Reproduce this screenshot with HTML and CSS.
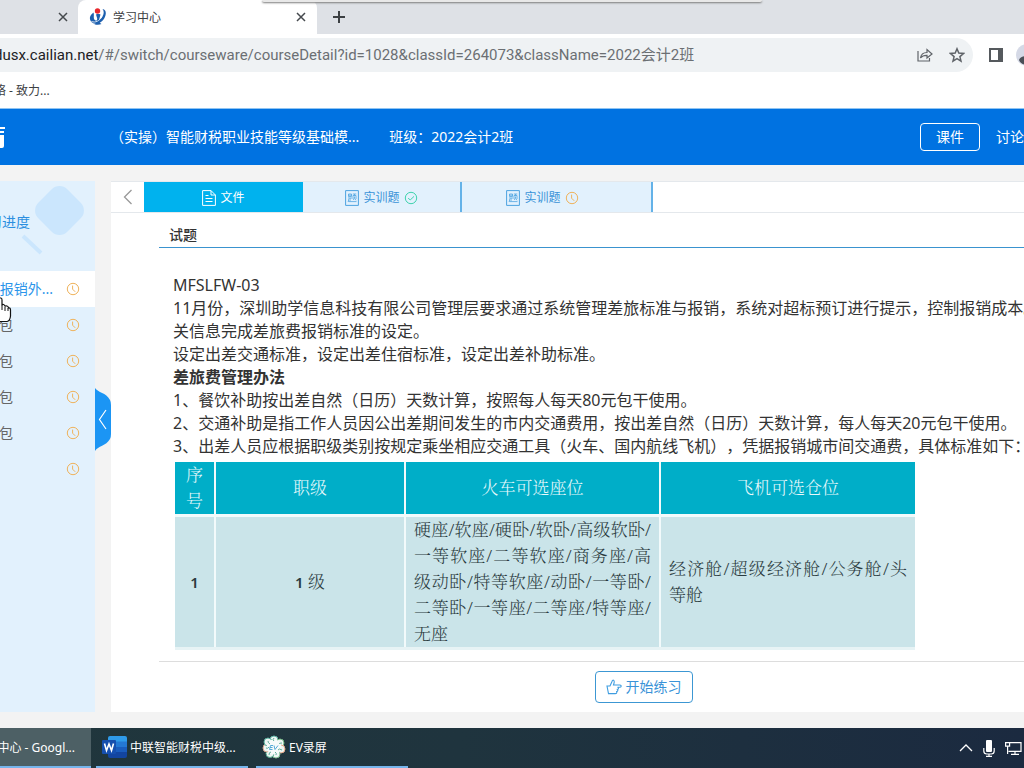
FILE: index.html
```html
<!DOCTYPE html>
<html lang="zh-CN">
<head>
<meta charset="utf-8">
<title>学习中心</title>
<link rel="stylesheet" href="styles.css">
</head>
<body>
<svg class="defs" width="0" height="0" aria-hidden="true">
  <symbol id="clock" viewBox="0 0 14 14"><circle cx="7" cy="7" r="5.7"/><path d="M6.6 3.6v3.6l2.6 2.6"/></symbol>
  <symbol id="close" viewBox="0 0 10 10"><path d="M1 1l8 8M9 1l-8 8"/></symbol>
  <symbol id="quiz" viewBox="0 0 14 16"><path d="M.6.6h12.8v14.8H.6z"/><path stroke-width=".8" d="M3.5 4h3v2.500h-3zM3.5 5.200h3M3 8h4M5 8v3.200M3.500 9.200v2l-.7.8M3.500 11.600h8M7.800 4h3.500M9.500 4v1.500M8 5.500h3v3.500M8 5.500v3.500M9.500 6.500v1.700L8.300 10M9.800 9l1.400 1.200"/></symbol>
</svg>

<div class="tabstrip">
  <div class="tab tab-back"><button class="plain" aria-label="关闭标签页"><svg class="x" width="10" height="10"><use href="#close"/></svg></button></div>
  <div class="tab tab-front">
    <svg width="18" height="18" viewBox="0 0 18 18"><path fill="#1d5fae" d="M4.500 4.500C1.500 6.500.2 9.500 1.200 12c.8 2.600 3.600 4 6.600 3.600C12.500 15 16.500 10.500 16.800 5.500 17 3 15.800 1.600 13.500 1c1.600 2 1.600 4.500.2 7-1.500 2.800-4 4.600-6 4.600-1.900 0-2.900-1.300-2.900-3.200 0-1.600.3-3-.3-4.900z"/><path fill="#1d5fae" d="M7 6.500c1.600-.6 3-.5 4.500 0L10 12c0 2 .8 3 2.500 4-2 1-5 1-7 .2C8 14.500 8 13 8.200 10.500z"/><path stroke="#fff" stroke-width=".8" fill="none" d="M2.500 13.500c4 1.500 8-.5 10.500-5"/><circle cx="8.500" cy="3" r="2.700" fill="#e8262c"/></svg>
    <span class="tab-name">学习中心</span>
    <button class="plain" aria-label="关闭标签页"><svg class="x" width="10" height="10"><use href="#close"/></svg></button>
  </div>
  <button class="plain new-tab" aria-label="新标签页"><svg width="14" height="14" viewBox="0 0 14 14"><path d="M7 1v12M1 7h12" stroke="#3c4043" stroke-width="2"/></svg></button>
  <div class="floating-edge"></div>
</div>

<div class="toolbar">
  <div class="omnibox">
    <div class="url"><span><b>edusx.cailian.net</b>/#/switch/courseware/courseDetail?id=1028&amp;classId=264073&amp;className=2022会计2班</span></div>
    <button class="plain" aria-label="分享"><svg width="16" height="16" viewBox="0 0 16 16" fill="none" stroke="#5f6368" stroke-width="1.200"><path d="M1 4v10h11.500v-3M3.500 11c.5-3.500 3-5.500 6.500-5.500V2.500L15 7l-5 4V8.300C7 8.200 5 9 3.500 11z"/></svg></button>
    <button class="plain" aria-label="收藏"><svg width="16" height="16" viewBox="0 0 16 16" fill="none" stroke="#5f6368" stroke-width="1.500"><path d="M8 1.800l1.800 4.300 4.700.4-3.600 3.100 1.100 4.600L8 11.700l-4 2.500 1.100-4.600-3.600-3.100 4.700-.4z"/></svg></button>
  </div>
  <button class="plain" aria-label="侧边栏"><svg width="14" height="14" viewBox="0 0 14 14"><path fill="#55595d" d="M0 0h14v14H0z"/><path fill="#fff" d="M2 2h7v10H2z"/></svg></button>
  <svg class="avatar" width="24" height="24" viewBox="0 0 24 24"><circle cx="12" cy="12" r="11" fill="#d5d9e6"/><path fill="#4a4f57" d="M4 17c1-3 4-4 8-4v9c-4 0-7-2-8-5z"/></svg>
</div>

<div class="bookmarks"><a class="bookmark" href="#">网络 - 致力...</a></div>

<header class="site-header">
  <div class="logo"><svg width="6" height="24" viewBox="0 0 6 24"><path fill="#fff" d="M0 2h5v2H0zM0 6h4v2H0zM0 10h4v11q0 2-2 2H0z"/></svg></div>
  <h1 class="course">（实操）智能财税职业技能等级基础模...</h1>
  <span class="class-name">班级：2022会计2班</span>
  <nav class="site-nav">
    <button class="nav-button">课件</button>
    <a href="#">讨论</a>
  </nav>
</header>

<main class="workspace">
  <aside class="sidebar">
    <div class="progress">
      <svg class="magnifier" width="72" height="76" viewBox="0 0 72 76"><rect x="19" y="8" width="41" height="41" rx="11" transform="rotate(45 39.500 28.500)" fill="#cbe6fd"/><path d="M3 54l18 17" stroke="#cbe6fd" stroke-width="4"/></svg>
      <span class="progress-name">学习进度</span>
    </div>
    <ul class="lessons">
      <li class="current"><span class="lesson"><a href="#">报销外...</a></span><svg class="clock" width="14" height="14"><use href="#clock"/></svg></li>
      <li><span class="lesson"><a href="#">外包</a></span><svg class="clock" width="14" height="14"><use href="#clock"/></svg></li>
      <li><span class="lesson"><a href="#">外包</a></span><svg class="clock" width="14" height="14"><use href="#clock"/></svg></li>
      <li><span class="lesson"><a href="#">外包</a></span><svg class="clock" width="14" height="14"><use href="#clock"/></svg></li>
      <li><span class="lesson"><a href="#">外包</a></span><svg class="clock" width="14" height="14"><use href="#clock"/></svg></li>
      <li><span class="lesson"></span><svg class="clock" width="14" height="14"><use href="#clock"/></svg></li>
    </ul>
    <svg class="pointer" width="12" height="26" viewBox="0 0 12 26"><path fill="#fff" stroke="#111" stroke-width="1.200" d="M-4 1h5q1 0 1 2v6q0-2 1.500-1.500T5 9.500q.5-1 2-.5t1.500 2q2-.5 2 2v6q-.5 5-3.500 5.500h-11"/><path stroke="#111" d="M2 9v4M5 10v4M8 11v3"/></svg>
  </aside>
  <div class="gutter"><button class="plain" aria-label="收起"><svg width="16" height="64" viewBox="0 0 16 64"><path fill="#1b95f4" d="M0 0C3 5 11 4 15 12q1 2 1 5v29q0 3-1 5C11 58 3 58 0 63z"/><path d="M11 22L4.500 31.500 11 41" fill="none" stroke="#fff" stroke-width="1.200"/></svg></button></div>

  <section class="panel">
    <div class="steps">
      <button class="step-prev" aria-label="上一个"><svg width="10" height="16" viewBox="0 0 10 16"><path d="M8.500 1L1.500 8l7 7" fill="none" stroke="#999" stroke-width="1.300"/></svg></button>
      <button class="step active"><svg width="14" height="16" viewBox="0 0 14 16" fill="none" stroke="#fff"><path d="M.6.6h8.400l4.400 4.400v10.400H.6zM9 .6V5h4.400M3.500 5.500h3M3.500 8.500h7M3.500 11.500h7"/></svg>文件</button>
      <button class="step"><svg class="quiz" width="14" height="16"><use href="#quiz"/></svg>实训题<svg class="done" width="14" height="14" viewBox="0 0 14 14"><circle cx="7" cy="7" r="5.700"/><path d="M4.200 7l2 2 3.800-3.600"/></svg></button>
      <button class="step step-wide"><svg class="quiz" width="14" height="16"><use href="#quiz"/></svg>实训题<svg class="clock" width="14" height="14"><use href="#clock"/></svg></button>
    </div>
    <div class="document">
      <h2 class="doc-title">试题</h2>
      <article class="doc-body">
        <p>MFSLFW-03</p>
        <p>11月份，深圳助学信息科技有限公司管理层要求通过系统管理差旅标准与报销，系统对超标预订进行提示，控制报销成本。<br>关信息完成差旅费报销标准的设定。</p>
        <p>设定出差交通标准，设定出差住宿标准，设定出差补助标准。</p>
        <p><strong>差旅费管理办法</strong></p>
        <p>1、餐饮补助按出差自然（日历）天数计算，按照每人每天80元包干使用。</p>
        <p>2、交通补助是指工作人员因公出差期间发生的市内交通费用，按出差自然（日历）天数计算，每人每天20元包干使用。</p>
        <p>3、出差人员应根据职级类别按规定乘坐相应交通工具（火车、国内航线飞机），凭据报销城市间交通费，具体标准如下：</p>
        <table class="grades">
          <colgroup><col class="c-no"><col class="c-grade"><col class="c-seat"><col class="c-seat"></colgroup>
          <thead><tr><th>序<br>号</th><th>职级</th><th>火车可选座位</th><th>飞机可选仓位</th></tr></thead>
          <tbody><tr><td class="mid"><b>1</b></td><td class="mid"><b>1</b> 级</td><td>硬座/软座/硬卧/软卧/高级软卧/一等软座/二等软座/商务座/高级动卧/特等软座/动卧/一等卧/二等卧/一等座/二等座/特等座/无座</td><td>经济舱/超级经济舱/公务舱/头等舱</td></tr></tbody>
        </table>
      </article>
      <footer class="doc-footer">
        <button class="start"><svg width="16" height="16" viewBox="0 0 16 16" fill="none" stroke="#3f9de0" stroke-width="1.100"><path d="M1 7h3l2-4.500Q6.500.8 7.500 1.200T8.200 3.500L7.500 6H14q1.200 0 1.200 1T14 8.200h-2.500q1.200.3 1 1.200t-1 1q.6.500.2 1.400t-1 .8q.5 2-1.500 2H2.500z"/></svg>开始练习</button>
      </footer>
    </div>
  </section>
</main>

<div class="taskbar">
  <button class="task task-active"><span>学习中心 - Googl...</span></button>
  <button class="task"><svg width="25" height="22" viewBox="0 0 25 22"><path fill="#2f9bea" d="M8 0h15q2 0 2 2v4H6V2q0-2 2-2z"/><path fill="#2478d4" d="M6 5.500h19v5.500H6z"/><path fill="#1a5dbe" d="M6 11h19v5H6z"/><path fill="#1345a0" d="M6 16h19v4q0 2-2 2H8q-2 0-2-2z"/><rect y="4" width="14" height="14" rx="1" fill="#164fae"/><path fill="none" stroke="#fff" stroke-width="1.600" d="M2.500 7.500l2 7L7 8l2.500 6.500 2-7"/></svg><span>中联智能财税中级...</span></button>
  <button class="task"><svg width="24" height="24" viewBox="0 0 24 24"><g fill="#eef6f3" stroke-width="1"><circle cx="12" cy="5" r="4" stroke="#5fb6a8"/><circle cx="18" cy="8" r="4" stroke="#74b986"/><circle cx="19" cy="14" r="4" stroke="#e8a98a"/><circle cx="14" cy="19" r="4" stroke="#7fbf93"/><circle cx="8" cy="18.500" r="4" stroke="#4fa98c"/><circle cx="5" cy="13" r="4" stroke="#d9a58d"/><circle cx="6" cy="7" r="4" stroke="#56ad9b"/></g><circle cx="12" cy="12" r="7.500" fill="#f7fbfa"/><g fill="none"><path stroke="#5fae9c" d="M12 3q-2 2 0 3M20 8q-3 0-3 1M20 15q-3-2-4 0M14 20q1-2-1-3M7 20q0-3 2-3M4 13q2 1 3-1M6 6q0 2 2 3"/><path stroke="#55aad8" d="M11 10.500H8.500l-1 4h3M8 12.500h2.500M12 10.500l1 4 3-4"/></g></svg><span>EV录屏</span></button>
  <div class="tray">
    <svg width="14" height="8" viewBox="0 0 14 8"><path d="M1 7l6-6 6 6" fill="none" stroke="#fff" stroke-width="1.300"/></svg>
    <svg width="12" height="17" viewBox="0 0 12 17"><rect x="3" width="6" height="12" rx="1" fill="#fff"/><path d="M.8 8v3q0 3 3 3h4.400q3 0 3-3V8M6 14v2.300M3 16.300h6" fill="none" stroke="#fff" stroke-width="1.200"/></svg>
    <svg width="17" height="14" viewBox="0 0 17 14"><path d="M5 1.600h11v8.800H3.500M10 10.400v3M6 13.400h8M.6 1.600h4v3.500h-4zM2.600 5v8" fill="none" stroke="#fff" stroke-width="1.200"/></svg>
  </div>
</div>
</body>
</html>
```
FILE: styles.css
```css
* { box-sizing: border-box; }
body {
  margin: 0;
  height: 100vh;
  display: flex;
  flex-direction: column;
  overflow: hidden;
  background: #fff;
  color: #333;
  font: 14px/20px "Noto Sans", "Noto Sans CJK SC", sans-serif;
  text-spacing-trim: space-all;
  white-space: nowrap;
}
button { font: inherit; color: inherit; white-space: nowrap; cursor: pointer; }
a { color: inherit; text-decoration: none; }
h1, h2, p, ul { margin: 0; padding: 0; font: inherit; list-style: none; }
svg { display: block; flex: none; }
.defs { position: absolute; }
.plain { display: flex; border: 0; padding: 0; background: none; }

/* browser chrome */
.tabstrip { position: relative; display: flex; height: 34px; background: #dee1e6; color: #3c4043; font-size: 12px; }
.tab { display: flex; align-items: center; }
.tab-back { width: 78px; padding-right: 10px; justify-content: flex-end; }
.tab-front { width: 239px; padding: 0 11px; gap: 6px; background: #fff; border-radius: 8px 8px 0 0; }
.tab-name { flex: 1; padding-top: 2px; }
.x { fill: none; stroke: #45494d; stroke-width: 1.5; }
.new-tab { align-items: center; padding-left: 15px; }
.floating-edge { position: absolute; top: 0; left: 262px; width: 500px; height: 2px; background: #e8e8e8; border-radius: 0 0 4px 4px; box-shadow: 0 1px 2px #777; }
.toolbar { display: flex; align-items: center; height: 41px; gap: 16px; }
.omnibox { display: flex; align-items: center; flex: 1; height: 34px; gap: 16px; padding-right: 8px; background: #eff2f4; border-radius: 0 17px 17px 0; color: #6b6f73; font-family: Roboto, "Noto Sans CJK SC", sans-serif; font-size: 15px; }
.url { flex: 1; }
.url span { margin-left: -14px; }
.url b { font-weight: 400; color: #202124; }
.avatar { margin: 0 -15px 0 -4px; }
.bookmarks { height: 34px; display: flex; align-items: center; padding-bottom: 2px; overflow: hidden; border-bottom: 1px solid #8fc4f2; font-size: 12px; color: #3c4043; }
.bookmark { margin-left: -18px; }

/* site header */
.site-header { display: flex; align-items: center; height: 56px; background: #0072e1; color: #fff; }
.logo { width: 110px; }
.class-name { margin-left: 30px; }
.site-nav { margin-left: auto; display: flex; align-items: center; gap: 16px; }
.nav-button { width: 60px; height: 28px; padding: 0; background: none; border: 1px solid #fff; border-radius: 4px; }

/* workspace */
.workspace { flex: 1; min-height: 0; display: flex; padding: 16px 0; background: #f3f3f3; }
.sidebar { position: relative; width: 95px; background: #e2f1fd; color: #666; }
.progress { position: relative; height: 90px; padding-bottom: 8px; display: flex; align-items: center; color: #2b8fe0; }
.progress-name { position: relative; width: 30px; display: flex; justify-content: flex-end; }
.magnifier { position: absolute; left: 20px; top: 1px; }
.lessons li { display: flex; align-items: center; height: 36px; }
.lesson { width: 66px; padding-right: 53px; display: flex; justify-content: flex-end; }
.lessons .current { background: #fff; color: #2b95ea; }
.current .lesson { padding-right: 13px; }
.clock { fill: none; stroke: #efb35c; }
.done { fill: none; stroke: #40d3ae; }
.quiz { fill: none; stroke: #4da3e0; }
.pointer { position: absolute; left: 0; top: 116px; }
.gutter { width: 16px; display: flex; align-items: center; padding-bottom: 54px; }

.panel { flex: 1; min-width: 0; display: flex; flex-direction: column; background: #fff; overflow: hidden; }
.steps { display: flex; height: 32px; border: solid #e4e8ec; border-width: 1px 0; }
.step-prev { width: 33px; padding: 0; display: flex; align-items: center; justify-content: center; border: 0; background: #fff; }
.step { width: 159px; padding: 2px 0 0; display: flex; align-items: center; justify-content: center; gap: 4px; border: 0; border-right: 2px solid #64b2e8; background: #e2f1fd; color: #3a93d8; font-size: 12px; }
.step.active { border: 0; background: #00b2ee; color: #fff; }
.step-wide { width: 191px; padding-right: 28px; }
.document { flex: 1; display: flex; flex-direction: column; padding-left: 48px; }
.doc-title { height: 35px; padding: 12px 10px 0; border-bottom: 1px solid #3a93cf; font-weight: 500; }
.doc-body { flex: 1; padding: 26px 0 0 14px; font-size: 16px; line-height: 23px; }
.doc-footer { display: flex; justify-content: center; height: 51px; padding: 9px 0; margin-right: -104px; border-top: 1px solid #ddd; }
.start { display: flex; align-items: center; gap: 4px; height: 32px; padding: 0 10px; background: #fff; border: 1px solid #3c97d3; border-radius: 4px; color: #3a93d8; }

.grades { width: 740px; margin: 4px 0 0 2px; table-layout: fixed; border-collapse: collapse; border-bottom: 3px solid #e7f3f5; font: 17px/26px "Noto Sans", "Noto Serif CJK SC", "Noto Sans CJK SC", serif; white-space: normal; color: #2b3b40; }
.c-no { width: 40px; }
.c-grade { width: 190px; }
.grades th, .grades td { border: solid #f2fafb; border-width: 0 0 2px 2px; font-weight: 300; }
.grades th:first-child, .grades td:first-child { border-left: 0; }
.grades th { padding: 0; border-bottom-width: 3px; background: #00aec8; color: #e8f9fc; }
.grades td { padding: 0 8px; background: #cae4e9; text-align: justify; }
.grades .mid { text-align: center; }
.grades b { font: 600 15px/26px "Noto Sans", sans-serif; }

/* taskbar */
.taskbar { display: flex; height: 40px; background: linear-gradient(90deg, #20363c, #1f343e 45%, #1b2a40); color: #fff; font-size: 12px; gap: 8px; }
.task { width: 152px; padding: 0 6px; display: flex; align-items: center; gap: 3px; border: 0; border-bottom: 2px solid #76b5ec; background: none; }
.task span { padding-top: 2px; }
.task-active { width: 91px; padding: 0 16px 0 0; margin-right: -3px; justify-content: flex-end; background: #4d6065; }
.tray { margin-left: auto; display: flex; align-items: center; gap: 10px; padding-right: 2px; }
```
